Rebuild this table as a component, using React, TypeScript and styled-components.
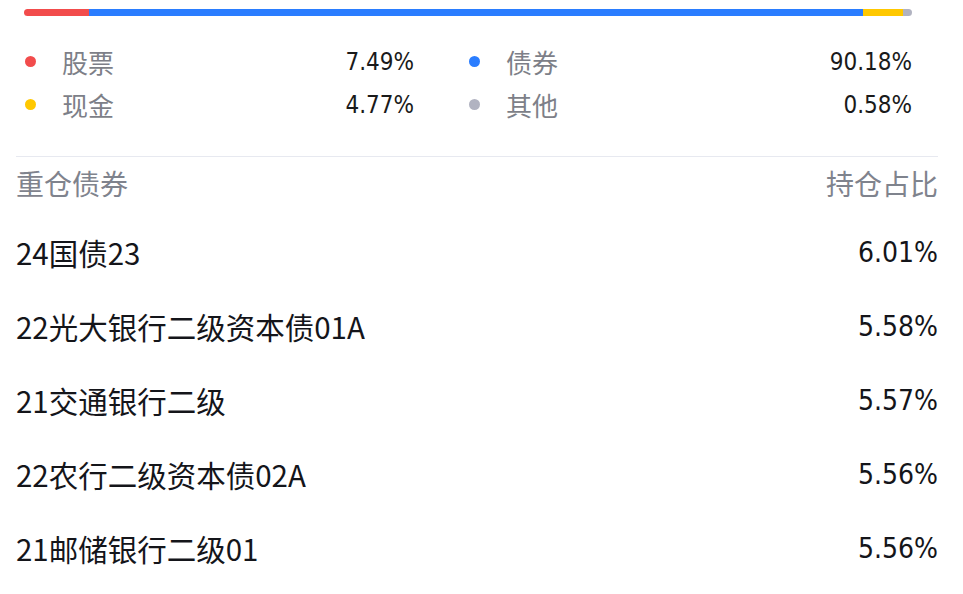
import React from 'react'
import styled, { createGlobalStyle } from 'styled-components'

const GlobalStyle = createGlobalStyle`
  body {
    margin: 0;
    background: #ffffff;
    font-family: "Noto Sans CJK SC", "Noto Sans", sans-serif;
  }
`

const segments = [
  { key: 'stock', label: '股票', value: '7.49%', color: '#f24c4c', width: 65 },
  { key: 'bond', label: '债券', value: '90.18%', color: '#2a7dff', width: 774 },
  { key: 'cash', label: '现金', value: '4.77%', color: '#ffc800', width: 40 },
  { key: 'other', label: '其他', value: '0.58%', color: '#b1b3c1', width: 9 },
]

const legendOrder = ['stock', 'bond', 'cash', 'other']

const holdings = [
  { name: '24国债23', ratio: '6.01%' },
  { name: '22光大银行二级资本债01A', ratio: '5.58%' },
  { name: '21交通银行二级', ratio: '5.57%' },
  { name: '22农行二级资本债02A', ratio: '5.56%' },
  { name: '21邮储银行二级01', ratio: '5.56%' },
]

export const App = () => {
  return (
    <Page>
      <GlobalStyle />
      <Summary>
        <Bar>
          {segments.map((s) => (
            <Segment key={s.key} $color={s.color} $width={s.width} />
          ))}
        </Bar>
        <Legend>
          {legendOrder.map((k) => {
            const s = segments.find((x) => x.key === k)!
            return (
              <LegendItem key={k}>
                <Dot $color={s.color} />
                <LegendLabel>{s.label}</LegendLabel>
                <LegendValue>{s.value}</LegendValue>
              </LegendItem>
            )
          })}
        </Legend>
      </Summary>
      <Divider />
      <TableHead>
        <span>重仓债券</span>
        <span>持仓占比</span>
      </TableHead>
      {holdings.map((h) => (
        <Row key={h.name}>
          <Name>{h.name}</Name>
          <Ratio>{h.ratio}</Ratio>
        </Row>
      ))}
    </Page>
  )
}

const Page = styled.div`
  padding: 9px 25px 0 16px;
`

const Summary = styled.div`
  padding: 0 51px 0 8px;
  margin-right: -25px;
`

const Bar = styled.div`
  display: flex;
  height: 7px;
  border-radius: 4px;
  overflow: hidden;
`

const Segment = styled.div<{ $color: string; $width: number }>`
  flex: ${(p) => p.$width} 0 0;
  background: ${(p) => p.$color};
`

const Legend = styled.div`
  display: grid;
  grid-template-columns: 390px 1fr;
  column-gap: 54px;
  margin-top: 24px;
`

const LegendItem = styled.div`
  display: flex;
  align-items: center;
  height: 43px;
`

const Dot = styled.span<{ $color: string }>`
  width: 11px;
  height: 11px;
  border-radius: 50%;
  background: ${(p) => p.$color};
  margin: 0 26px 0 1px;
  flex-shrink: 0;
`

const LegendLabel = styled.span`
  flex: 1;
  font-size: 26px;
  color: #7d7f88;
`

const LegendValue = styled.span`
  font-family: "DejaVu Sans Condensed", "DejaVu Sans", sans-serif;
  font-size: 24px;
  color: #1a1a1a;
`

const Divider = styled.div`
  margin-top: 30px;
  border-top: 1px solid #e7e9f0;
`

const TableHead = styled.div`
  display: flex;
  justify-content: space-between;
  padding: 6px 0 12px;
  line-height: 40px;
  font-size: 28px;
  color: #7f838d;
`

const Row = styled.div`
  display: flex;
  justify-content: space-between;
  align-items: center;
  height: 74px;
`

const Name = styled.span`
  font-size: 29.5px;
  color: #14151a;
`

const Ratio = styled.span`
  font-family: "DejaVu Sans Condensed", "DejaVu Sans", sans-serif;
  font-size: 28px;
  color: #14151a;
`

export default App
